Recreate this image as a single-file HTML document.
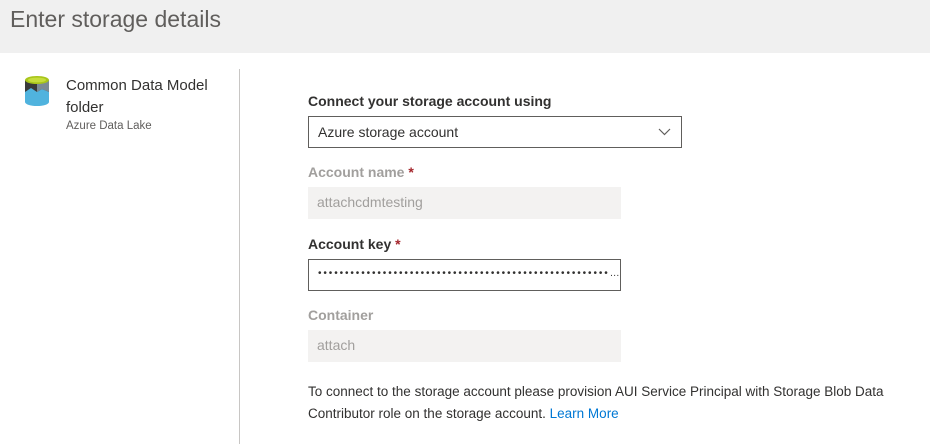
<!DOCTYPE html><html><head><style>
body{margin:0;width:930px;height:444px;background:#fff;font-family:"Liberation Sans",sans-serif;position:relative;overflow:hidden;color:#323130}
.hdr{position:absolute;left:0;top:0;width:930px;height:53px;background:#f0f0f0}
.hdr span{position:absolute;left:10px;top:6px;font-size:23px;color:#605e5c;font-weight:300}
.abs{position:absolute}
.lbl{position:absolute;left:308px;font-size:14px;font-weight:bold}
.in{position:absolute;left:308px;width:313px;height:32px;box-sizing:border-box;font-size:14px;padding:7px 9px}
</style></head><body>
<div class="hdr"><span>Enter storage details</span></div>
<svg class="abs" style="left:24px;top:74px" width="26" height="34" viewBox="0 0 26 32">
<path d="M1 5 H25 V27 A12 4 0 0 1 1 27 Z" fill="#50b3de"/>
<path d="M1 5 H25 V17 L18 14 L13 17 L7 13 L1 17Z" fill="#3a3a3a"/>
<path d="M13 5H25V17L18 14L13 17Z" fill="#7a8a94"/>
<ellipse cx="13" cy="5" rx="12" ry="4" fill="#a8c51a"/>
<ellipse cx="13" cy="5" rx="9" ry="2.4" fill="#c6dd3c"/></svg>
<div class="abs" style="left:66px;top:75px;font-size:15px;line-height:22px">Common Data Model<br>folder</div>
<div class="abs" style="left:66px;top:120px;font-size:11.5px;color:#605e5c">Azure Data Lake</div>
<div class="abs" style="left:239px;top:69px;width:1px;height:375px;background:#c8c6c4"></div>
<div class="lbl" style="top:93px">Connect your storage account using</div>
<div class="in" style="top:116px;width:374px;border:1px solid #605e5c">Azure storage account
<svg class="abs" style="right:10px;top:11px" width="13" height="8"><path d="M1 1l5.5 5.5L12 1" fill="none" stroke="#605e5c" stroke-width="1.2"/></svg></div>
<div class="lbl" style="top:164px;color:#a19f9d">Account name <span style="color:#a4262c">*</span></div>
<div class="in" style="top:187px;background:#f3f2f1;color:#a19f9d">attachcdmtesting</div>
<div class="lbl" style="top:236px">Account key <span style="color:#a4262c">*</span></div>
<div class="in" style="top:259px;border:1px solid #605e5c;font-size:10px;padding:8px 9px;letter-spacing:1.9px;white-space:nowrap;overflow:hidden">••••••••••••••••••••••••••••••••••••••••••••••••••••••<span style="letter-spacing:0">…</span></div>
<div class="lbl" style="top:307px;color:#a19f9d">Container</div>
<div class="in" style="top:330px;background:#f3f2f1;color:#a19f9d">attach</div>
<div class="abs" style="left:308px;top:381px;font-size:13.5px;line-height:22px;width:610px">To connect to the storage account please provision AUI Service Principal with Storage Blob Data Contributor role on the storage account. <span style="color:#0078d4">Learn More</span></div>
</body></html>
